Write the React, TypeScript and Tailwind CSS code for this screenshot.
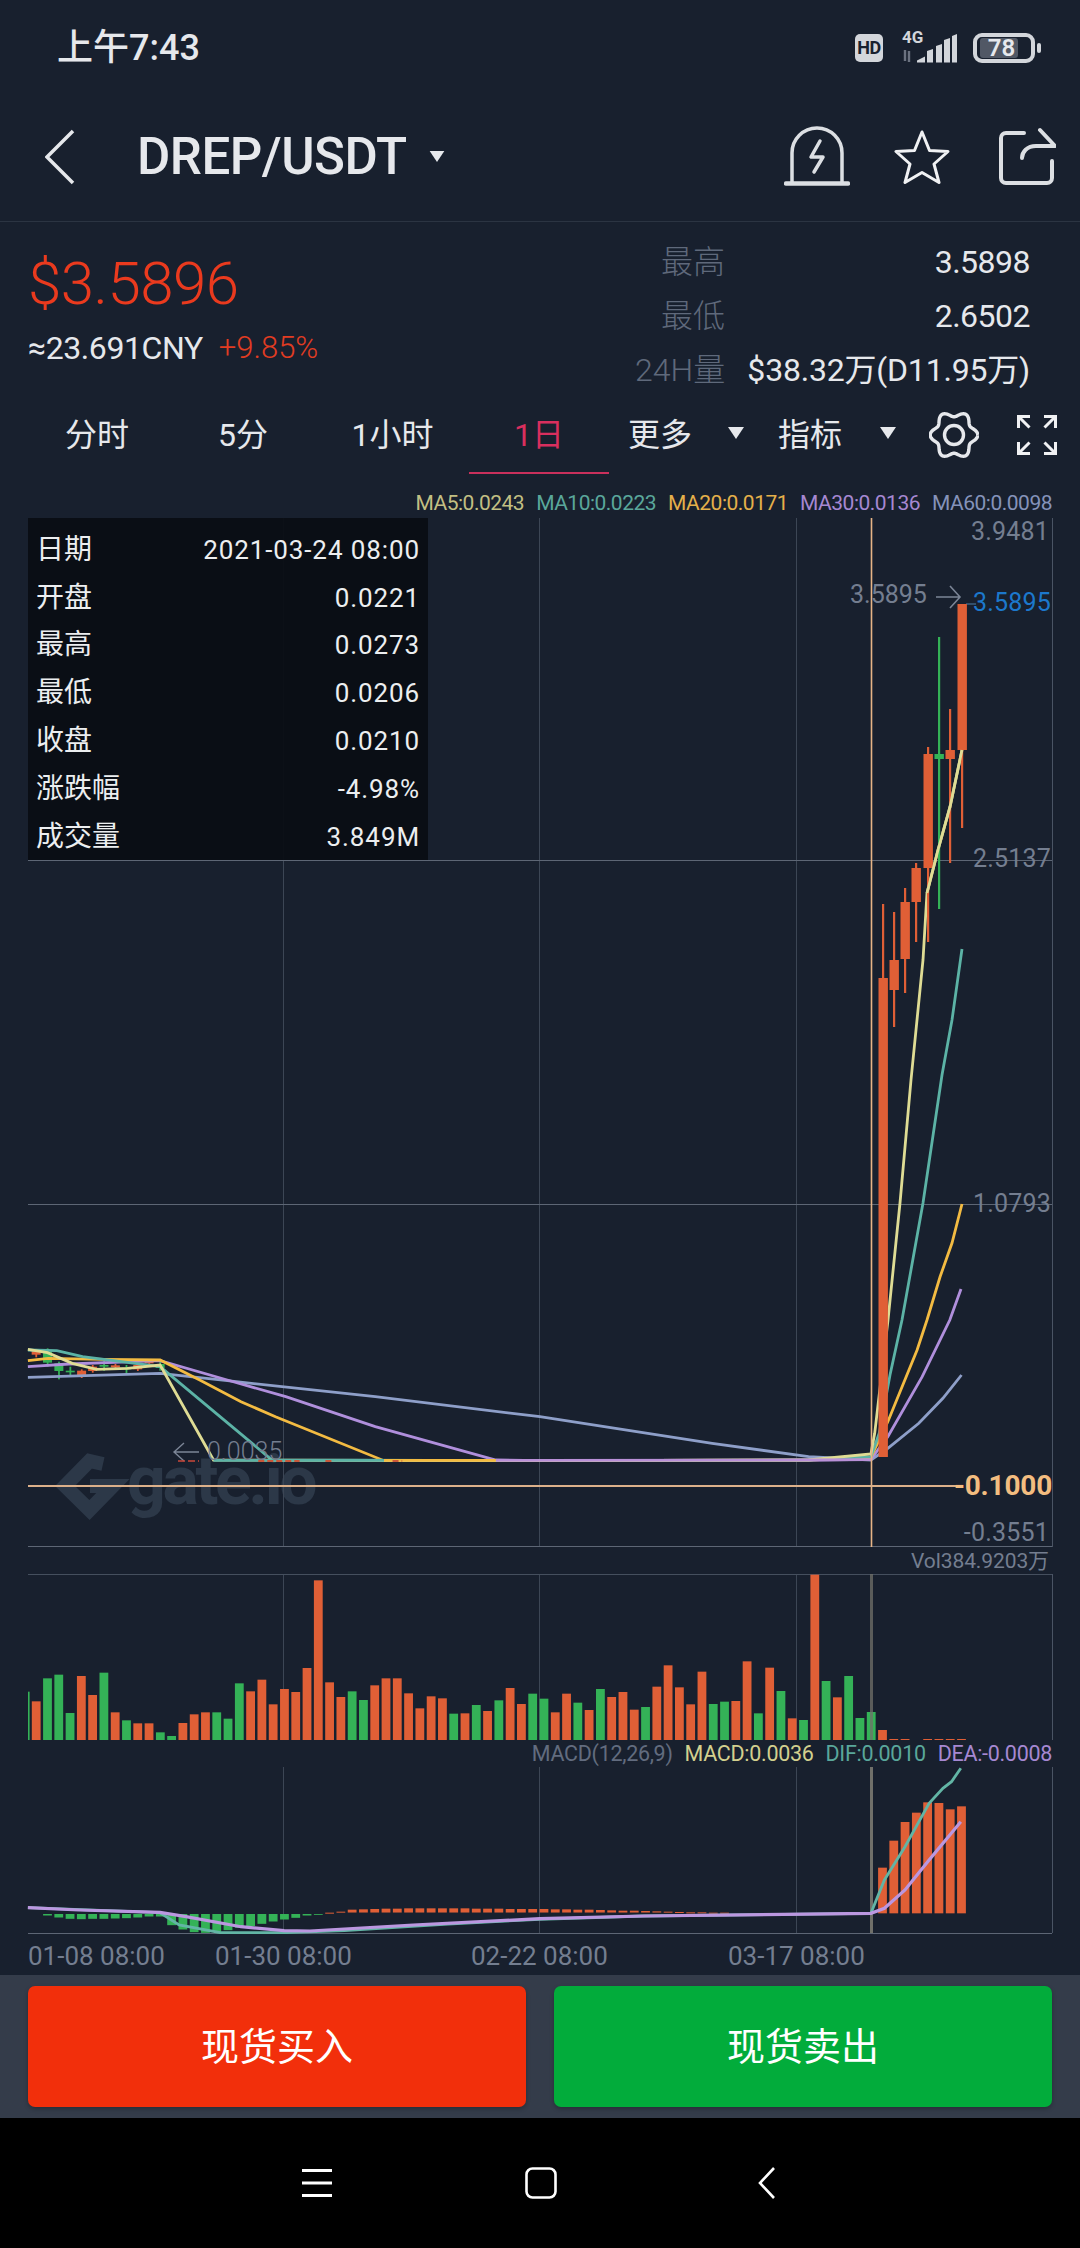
import React from "react";

const R = "#e05f36";
const G = "#34b257";

type P = [number, number];
const z4 = (a: number[][]): P[] => a.map(([x, y]) => [x / 2.904, 1300 + y / 3]);
const z5 = (a: number[][]): P[] => a.map(([x, y]) => [540 + x / 2.904, 1300 + y / 3]);
const z6 = (a: number[][]): P[] => a.map(([x, y]) => [x / 2.904, 1560 + y / 3]);
const z7 = (a: number[][]): P[] => a.map(([x, y]) => [540 + x / 2.904, 1560 + y / 3]);
const pts = (a: P[]) => a.map((p) => p[0].toFixed(1) + "," + p[1].toFixed(1)).join(" ");

const ma5: P[] = [
  ...z4([[81, 148], [138, 158], [210, 190], [280, 208], [370, 205], [465, 195], [620, 480], [1568, 482]]),
  ...z5([[780, 480], [961, 462], [972, 400]]),
  [888, 1320], [900, 1203], [911, 1080], [923, 960], [927, 893], [938, 850], [950, 807], [962, 750],
];
const ma10: P[] = [
  ...z4([[81, 150], [165, 152], [240, 170], [465, 200], [790, 480], [1568, 482]]),
  ...z5([[780, 480], [961, 470], [985, 400]]),
  [890, 1375], [902, 1320], [923, 1203], [942, 1075], [952, 1020], [962, 949],
];
const ma20: P[] = [
  ...z4([[81, 182], [140, 175], [300, 178], [465, 180], [580, 240], [700, 305], [800, 350], [1115, 482], [1568, 482]]),
  ...z5([[780, 480], [961, 472], [1010, 365], [1095, 150]]),
  [927, 1320], [940, 1277], [952, 1243], [962, 1204],
];
const ma30: P[] = [
  ...z4([[81, 200], [200, 192], [465, 182], [660, 240], [830, 290], [1090, 380], [1440, 480], [1568, 482]]),
  ...z5([[780, 480], [961, 478], [1010, 410], [1110, 230], [1190, 60]]),
  [961, 1289],
];
const ma60: P[] = [
  ...z4([[81, 232], [465, 220], [660, 242], [1090, 290], [1568, 350]]),
  ...z5([[500, 430], [780, 470], [961, 480], [1010, 445], [1100, 370], [1170, 295], [1224, 225]]),
];

type Candle = [number, number, number, number, number, string];
const candles: Candle[] = [
  [883, 978, 1457, 904, 1457, R],
  [894, 960, 990, 912, 1027, R],
  [905, 902, 959, 888, 993, R],
  [916, 868, 902, 863, 942, R],
  [928, 754, 868, 747, 942, R],
  [939, 754, 759, 637, 909, G],
  [950, 750, 759, 709, 863, R],
  [962, 604, 750, 604, 828, R],
];
const tiny: number[][] = [
  [105, 152, 164, 148, 172, 0], [138, 155, 188, 145, 200, 1], [171, 190, 213, 185, 238, 1], [204, 212, 217, 200, 226, 1],
  [237, 212, 226, 208, 234, 0], [269, 200, 213, 195, 218, 0], [302, 195, 200, 182, 212, 1], [335, 196, 202, 192, 208, 0],
  [367, 203, 208, 195, 224, 1], [400, 195, 208, 192, 213, 0], [433, 184, 190, 178, 195, 0], [465, 192, 204, 184, 212, 1],
];
const tinyFlat = [[750, 870], [945, 968], [1140, 1168]];

const volTops: [string, number][] = [
  ["o", 424], ["g", 355], ["g", 344], ["g", 459], ["o", 348], ["o", 405], ["g", 338], ["o", 457], ["g", 481], ["o", 490], ["o", 490], ["g", 517], ["g", 528],
  ["o", 489], ["o", 463], ["o", 457], ["g", 457], ["g", 476], ["g", 370], ["o", 394], ["o", 359], ["o", 433], ["o", 387], ["o", 396], ["o", 324], ["o", 61],
  ["o", 367], ["o", 411], ["g", 394], ["g", 420], ["o", 376], ["o", 355], ["o", 355], ["o", 400], ["o", 445], ["o", 409], ["o", 415], ["g", 461], ["o", 460],
  ["g", 435], ["o", 453], ["g", 421], ["o", 384], ["o", 432], ["g", 401],
  ["g", 416], ["o", 457], ["o", 401], ["g", 428], ["o", 450], ["g", 387], ["o", 411], ["o", 396], ["o", 449], ["g", 441], ["o", 380], ["o", 316], ["o", 382],
  ["o", 433], ["o", 335], ["g", 432], ["g", 425], ["o", 423], ["o", 304], ["g", 460], ["o", 323], ["g", 393], ["o", 475], ["g", 480], ["o", 44], ["g", 363],
  ["o", 412], ["g", 348], ["g", 474], ["g", 456], ["o", 510], ["o", 537], ["o", 537], ["o", 540], ["o", 537], ["o", 537], ["o", 537], ["o", 537],
];
const barX = (i: number) => 36.2 + i * 11.284;

const macdGreen = [1063, 1069, 1073, 1074, 1073, 1073, 1072, 1071, 1069, 1066, 1066, 1092, 1105, 1113, 1115, 1112, 1107, 1100, 1095, 1088, 1081, 1075, 1070, 1063, 1061];
const macdRed = [1058, 1055, 1049, 1048, 1047, 1046, 1046, 1045, 1045, 1045, 1045, 1045, 1045, 1046, 1046, 1046, 1047, 1047, 1047, 1047, 1048, 1048, 1049, 1049, 1050, 1051, 1052, 1052, 1053, 1054, 1055, 1056, 1057, 1057, 1058, 1058];
const macdTall = [923, 842, 786, 758, 727, 729, 748, 739];

const dif: P[] = [
  ...z6([[81, 1043], [465, 1058], [520, 1095], [640, 1118], [825, 1118], [1000, 1112], [1300, 1092], [1568, 1078]]),
  ...z7([[300, 1068], [961, 1060], [1000, 960], [1060, 860], [1130, 730], [1170, 685], [1195, 665], [1222, 625]]),
];
const dea: P[] = [
  ...z6([[81, 1043], [230, 1050], [465, 1057], [540, 1070], [700, 1100], [825, 1112], [900, 1113], [1200, 1095], [1568, 1076]]),
  ...z7([[300, 1068], [961, 1060], [1000, 1045], [1060, 990], [1130, 900], [1222, 785]]),
];

const gearPoints = Array.from({ length: 121 }, (_, i) => {
  const t = (i / 120) * Math.PI * 2;
  const r = 21 + 2.8 * Math.cos(6 * t);
  return (25 + r * Math.cos(t)).toFixed(2) + "," + (25 + r * Math.sin(t)).toFixed(2);
}).join(" ");

const rows = [
  ["日期", "2021-03-24 08:00"],
  ["开盘", "0.0221"],
  ["最高", "0.0273"],
  ["最低", "0.0206"],
  ["收盘", "0.0210"],
  ["涨跌幅", "-4.98%"],
  ["成交量", "3.849M"],
];

function VGrid({ y1, y2 }: { y1: number; y2: number }) {
  return (
    <>
      {[283, 539, 796].map((x) => (
        <line key={x} x1={x + 0.5} x2={x + 0.5} y1={y1} y2={y2} stroke="#3c4655" />
      ))}
      <line x1={1052.5} x2={1052.5} y1={y1} y2={y2} stroke="#4a5464" />
    </>
  );
}

function Caret({ className }: { className: string }) {
  return (
    <svg viewBox="0 0 16 12" className={className}>
      <path d="M0 0H16L8 12Z" fill="#e6e8ec" />
    </svg>
  );
}

export default function App() {
  return (
    <div
      className="relative flex h-[2248px] w-[1080px] flex-col overflow-hidden bg-[#18202e] text-[#e6e8ec]"
      style={{ fontFamily: 'Roboto, "Noto Sans CJK SC", sans-serif' }}
    >
      {/* status bar */}
      <div className="flex h-[96px] items-center justify-between pl-[57px] pr-[39px]">
        <span className="text-[36px] font-medium leading-none">上午7:43</span>
        <div className="flex items-center">
          <span className="flex h-[28px] w-[28px] items-center justify-center rounded-[5px] bg-[#d3d6db] text-[18px] font-bold leading-none tracking-[-0.5px] text-[#18202e]">
            HD
          </span>
          <div className="relative ml-[17px] h-[32px] w-[57px]">
            <span className="absolute left-[2px] top-[-3px] text-[17px] font-bold leading-none text-[#d3d6db]">4G</span>
            <svg viewBox="900 30 57 32" className="h-[32px] w-[57px]">
              <path d="M905 48v11M909 60V49" stroke="#6b7280" strokeWidth="2.4" />
              <path d="M917 60.5v-2l8-4v6zM927 60.5V49l6-2v13.5zM936 60.5V44l6-2v18.5zM944 60.5V38l6-2v24.5zM952 60.5V34l5-2v28.5z" fill="#d3d6db" />
            </svg>
          </div>
          <div className="relative ml-[16px] flex h-[30px] w-[62px] items-center rounded-[9px] border-[4px] border-[#d3d6db]">
            <span className="absolute left-[3px] top-[1px] h-[20px] w-[38px] rounded-[3px] bg-[#515865]" />
            <span className="relative w-full pr-[5px] text-center text-[24px] font-semibold leading-none">78</span>
          </div>
          <span className="ml-[2px] h-[10px] w-[4px] rounded-[2px] bg-[#d3d6db]" />
        </div>
      </div>

      {/* header */}
      <div className="flex h-[126px] items-center border-b border-[#2b3442] pb-[4px]">
        <svg viewBox="0 0 32 56" className="ml-[45px] h-[56px] w-[32px]">
          <path d="M29 2L3 28l26 26" fill="none" stroke="#e6e8ec" strokeWidth="3.5" transform="translate(-1 0)" />
        </svg>
        <span className="ml-[60px] text-[51px] font-medium leading-none tracking-[-0.5px]">DREP/USDT</span>
        <Caret className="ml-[22px] h-[11px] w-[16px]" />
        <svg viewBox="0 0 66 66" className="ml-[339px] h-[66px] w-[66px]">
          <path d="M8 58V29a25 25 0 0 1 50 0v29" fill="none" stroke="#dcdfe3" strokeWidth="3.5" />
          <path d="M2 59.5H64" stroke="#dcdfe3" strokeWidth="4.5" strokeLinecap="round" />
          <path d="M36 17L27 33h12l-9 15" fill="none" stroke="#dcdfe3" strokeWidth="3.5" strokeLinecap="round" strokeLinejoin="round" />
        </svg>
        <svg viewBox="0 0 56 54" className="ml-[44px] h-[54px] w-[56px]">
          <path d="M28 2l7.5 18.5L54 21.5 40 34l5 18.5L28 42.5 11 52.5 16 34 2 21.5l18.5-1z" fill="none" stroke="#f0f1f3" strokeWidth="3" strokeLinejoin="round" />
        </svg>
        <svg viewBox="0 0 60 60" className="ml-[46px] h-[60px] w-[60px]">
          <path d="M28 6H10a5 5 0 0 0-5 5v40a5 5 0 0 0 5 5h41a5 5 0 0 0 5-5V34" fill="none" stroke="#dcdfe3" strokeWidth="4" strokeLinecap="round" />
          <path d="M44 3l15 16H40c-9 0-14 6-14 12" fill="none" stroke="#dcdfe3" strokeWidth="4" strokeLinecap="round" strokeLinejoin="round" />
        </svg>
      </div>

      {/* price block */}
      <div className="flex h-[181px] justify-between pl-[28px] pr-[50px]">
        <div>
          <div className="mt-[27px] text-[60px] font-light leading-[70px] tracking-[-0.5px] text-[#ea3a1e]">$3.5896</div>
          <div className="mt-[7px] flex items-center text-[32px] leading-[44px]">
            <span className="tracking-[-0.4px]">≈23.691CNY</span>
            <span className="ml-[16px] text-[31px] font-light text-[#e13c22]">+9.85%</span>
          </div>
        </div>
        <div className="mt-[13px] text-[32px]">
          <div className="flex h-[54px] items-center">
            <span className="w-[90px] whitespace-nowrap text-right font-light text-[#5f697b]">最高</span>
            <span className="w-[305px] text-right tracking-[-0.5px]">3.5898</span>
          </div>
          <div className="flex h-[54px] items-center">
            <span className="w-[90px] whitespace-nowrap text-right font-light text-[#5f697b]">最低</span>
            <span className="w-[305px] text-right tracking-[-0.5px]">2.6502</span>
          </div>
          <div className="flex h-[54px] items-center">
            <span className="w-[90px] whitespace-nowrap text-right font-light text-[#5f697b]">24H量</span>
            <span className="w-[305px] text-right tracking-[-0.2px]">$38.32万(D11.95万)</span>
          </div>
        </div>
      </div>

      {/* tabs */}
      <div className="flex h-[86px] items-start pl-[24px] text-[32px] leading-none">
        <span className="flex h-[64px] w-[146px] items-center justify-center">分时</span>
        <span className="flex h-[64px] w-[146px] items-center justify-center">5分</span>
        <span className="flex h-[64px] w-[153px] items-center justify-center">1小时</span>
        <span className="h-[71px] w-[140px] border-b-[2px] border-[#c9305c] pt-[16px] text-center text-[#d92f5e]">1日</span>
        <span className="ml-[19px] w-[64px] pt-[16px] text-center">更多</span>
        <Caret className="ml-[36px] mt-[24px] h-[12px] w-[16px]" />
        <span className="ml-[34px] w-[64px] pt-[16px] text-center">指标</span>
        <Caret className="ml-[38px] mt-[24px] h-[12px] w-[16px]" />
        <svg viewBox="0 0 50 50" className="ml-[33px] mt-[7px] h-[50px] w-[50px]">
          <polyline points={gearPoints} fill="none" stroke="#e6e8ec" strokeWidth="3.4" strokeLinejoin="round" />
          <circle cx="25" cy="25" r="9.5" fill="none" stroke="#e6e8ec" strokeWidth="3.4" />
        </svg>
        <svg viewBox="0 0 40 40" className="ml-[38px] mt-[12px] h-[40px] w-[40px]">
          <path d="M1.5 13V1.5H13M1.5 1.5l11 11M27 1.5h11.5V13M38.5 1.5l-11 11M1.5 27v11.5H13M1.5 38.500l11-11M38.5 27v11.5H27M38.5 38.500l-11-11" fill="none" stroke="#f0f1f3" strokeWidth="3" />
        </svg>
      </div>

      {/* MA legend */}
      <div className="flex h-[29px] items-center justify-end gap-[12px] pr-[28px] text-[21px] leading-none tracking-[-0.5px]">
        <span className="text-[#c2bf83]">MA5:0.0243</span>
        <span className="text-[#5aa79b]">MA10:0.0223</span>
        <span className="text-[#e5b04a]">MA20:0.0171</span>
        <span className="text-[#a688d2]">MA30:0.0136</span>
        <span className="text-[#8593ba]">MA60:0.0098</span>
      </div>

      {/* main chart */}
      <div className="relative h-[1030px] w-[1080px]">
        <svg viewBox="0 518 1080 1030" className="absolute left-0 top-0 h-[1030px] w-[1080px]">
          <polyline points="103,1464 89.5,1461 65,1486 89.5,1510 113,1486 90,1486" fill="none" stroke="#2c3848" strokeWidth="14" />
        </svg>
        <span className="absolute left-[127px] top-[925px] text-[68px] font-bold leading-[76px] tracking-[-3.4px] text-[#2c3848]">gate.io</span>
        <svg viewBox="0 518 1080 1030" className="absolute left-0 top-0 h-[1030px] w-[1080px]">
          <VGrid y1={518} y2={1547} />
          <line x1={28} x2={1052} y1={860.5} y2={860.5} stroke="#5d6675" />
          <line x1={28} x2={1052} y1={1204.5} y2={1204.5} stroke="#5d6675" />
          <line x1={28} x2={1052} y1={1546.5} y2={1546.5} stroke="#5d6675" />
          <line x1={966} x2={976} y1={604} y2={604} stroke="#4f7fa8" />
          {tiny.map(([x, b1, b2, w1, w2, g], i) => (
            <g key={i} fill={g ? G : R}>
              <rect x={x / 2.904 - 0.8} y={1300 + w1 / 3} width={1.8} height={(w2 - w1) / 3} />
              <rect x={x / 2.904 - 4.5} y={1300 + b1 / 3} width={9} height={(b2 - b1) / 3} />
            </g>
          ))}
          <polyline points={pts(ma60)} fill="none" stroke="#8e9fc9" strokeWidth="2.8" />
          <polyline points={pts(ma30)} fill="none" stroke="#b08fdc" strokeWidth="2.8" />
          <polyline points={pts(ma20)} fill="none" stroke="#f3bb42" strokeWidth="2.8" />
          <polyline points={pts(ma10)} fill="none" stroke="#5cb3a6" strokeWidth="2.8" />
          <polyline points={pts(ma5)} fill="none" stroke="#dfdc94" strokeWidth="2.8" />
          <polyline points={pts(z4([[620, 481], [1115, 481]]))} fill="none" stroke="#5cb3a6" strokeWidth="2.8" />
          <polyline points={pts(z4([[1115, 481], [1440, 481]]))} fill="none" stroke="#f3bb42" strokeWidth="2.8" />
          <polyline points={pts(z4([[1440, 481], [1568, 481]]))} fill="none" stroke="#b990d8" strokeWidth="2.8" />
          <polyline points={pts(z5([[0, 481], [780, 480], [961, 479]]))} fill="none" stroke="#b990d8" strokeWidth="2.8" />
          {tinyFlat.map(([a, b], i) => (
            <line key={i} x1={a / 2.904} x2={b / 2.904} y1={1461} y2={1461} stroke="#c9573a" strokeWidth="2" strokeDasharray="6 3" />
          ))}
          <line x1={871.5} x2={871.5} y1={518} y2={1547} stroke="#e6b486" strokeWidth="1.6" />
          <line x1={28} x2={963} y1={1486} y2={1486} stroke="#dcb08a" strokeWidth="1.8" />
          {candles.map(([x, b1, b2, w1, w2, c]) => (
            <g key={x} fill={c}>
              <rect x={x - 1} y={w1} width={2.2} height={w2 - w1} />
              <rect x={x - 4.5} y={b1} width={9.4} height={b2 - b1} />
            </g>
          ))}
          <polyline points={pts([[927, 893], [938, 850], [950, 807], [962, 750]])} fill="none" stroke="#dfdc94" strokeWidth="2.8" />
          <path d="M936 597h24M950 586l10 11-10 11" fill="none" stroke="#7b8596" strokeWidth="1.6" />
          <path d="M199 1452h-25M184 1443l-10 9 10 9" fill="none" stroke="#7b8596" strokeWidth="1.4" />
          <line x1={178} x2={199} y1={1461} y2={1461} stroke="#c9473a" strokeWidth="1.6" strokeDasharray="7 3" />
        </svg>

        {/* OHLC overlay */}
        <div className="absolute left-[28px] top-0 h-[342px] w-[400px] bg-[#0a0e14]/95 px-[8px] pt-[8px]">
          {rows.map(([a, b]) => (
            <div key={a} className="flex h-[47.8px] items-center justify-between text-[#eceef0]">
              <span className="text-[28px] leading-none">{a}</span>
              <span className="text-[26px] font-normal leading-none tracking-[0.9px]">{b}</span>
            </div>
          ))}
        </div>

        {/* axis labels */}
        <span className="absolute right-[31px] top-[-1px] text-[25px] leading-[30px] tracking-[0.2px] text-[#747e90]">3.9481</span>
        <span className="absolute right-[29px] top-[70px] text-[25px] leading-[30px] tracking-[0.2px] text-[#1c78cc]">3.5895</span>
        <span className="absolute left-[850px] top-[62px] text-[25px] leading-[30px] text-[#747e90]">3.5895</span>
        <span className="absolute right-[29px] top-[326px] text-[25px] leading-[30px] tracking-[0.2px] text-[#747e90]">2.5137</span>
        <span className="absolute right-[29px] top-[671px] text-[25px] leading-[30px] tracking-[0.2px] text-[#747e90]">1.0793</span>
        <span className="absolute left-[207px] top-[919px] text-[25px] font-light leading-[30px] text-[#747e90]">0.0035</span>
        <span className="absolute right-[28px] top-[952px] text-[28px] font-bold leading-[32px] tracking-[-0.2px] text-[#f3bd80]">-0.1000</span>
        <span className="absolute right-[31px] top-[1000px] text-[25px] leading-[30px] tracking-[0.2px] text-[#747e90]">-0.3551</span>
      </div>

      {/* vol label */}
      <div className="flex h-[26px] items-center justify-end pr-[31px] text-[21px] leading-none tracking-[-0.1px] text-[#747e90]">
        Vol384.9203万
      </div>

      {/* vol chart */}
      <svg viewBox="0 1574 1080 167" className="h-[167px] w-[1080px] shrink-0">
        <VGrid y1={1574} y2={1740} />
        <line x1={28} x2={1052} y1={1574.5} y2={1574.5} stroke="#454f5e" />
        <rect x={28} y={1560 + 395 / 3} width={1.6} height={(540 - 395) / 3} fill={G} />
        {volTops.map(([c, top], i) => (
          <rect
            key={i}
            x={barX(i) - 4.4}
            y={1560 + top / 3}
            width={8.8}
            height={(540 - top) / 3}
            fill={c === "g" ? G : R}
            opacity={top === 540 ? 0 : 1}
          />
        ))}
        <rect x={870} y={1574} width={3} height={166} fill="#70706a" fillOpacity="0.75" />
      </svg>

      {/* macd legend */}
      <div className="flex h-[26px] items-center justify-end gap-[12px] pr-[28px] text-[21.5px] leading-none tracking-[-0.3px]">
        <span className="text-[#626c7f]">MACD(12,26,9)</span>
        <span className="text-[#d3d08e]">MACD:0.0036</span>
        <span className="text-[#5aa79b]">DIF:0.0010</span>
        <span className="text-[#a688d2]">DEA:-0.0008</span>
      </div>

      {/* macd chart */}
      <svg viewBox="0 1767 1080 167" className="h-[167px] w-[1080px] shrink-0">
        <VGrid y1={1767} y2={1933} />
        <line x1={28} x2={1052} y1={1933.5} y2={1933.5} stroke="#5d6675" />
        {macdGreen.map((b, i) => (
          <rect key={i} x={barX(i + 1) - 4.4} y={1914} width={8.8} height={(b - 1060) / 3 + 0.5} fill={G} />
        ))}
        {macdRed.map((t, i) => (
          <rect key={i} x={barX(i + 26) - 4.4} y={1560 + t / 3} width={8.8} height={Math.max((1060 - t) / 3 - 0.8, 1)} fill={R} />
        ))}
        <rect x={870} y={1767} width={3} height={166} fill="#70706a" />
        {macdTall.map((t, i) => (
          <rect key={i} x={barX(75 + i) - 4.4} y={1560 + t / 3} width={8.8} height={(1060 - t) / 3} fill={R} />
        ))}
        <polyline points={pts(dif)} fill="none" stroke="#62b5a5" strokeWidth="2.8" />
        <polyline points={pts(dea)} fill="none" stroke="#bb97e0" strokeWidth="3.2" />
      </svg>

      {/* date axis */}
      <div className="flex h-[41px] items-center pl-[28px] pt-[3px] text-[26px] leading-none text-[#747e90]">
        <span className="w-[187px] whitespace-nowrap">01-08 08:00</span>
        <span className="w-[256px] whitespace-nowrap">01-30 08:00</span>
        <span className="w-[257px] whitespace-nowrap">02-22 08:00</span>
        <span className="whitespace-nowrap">03-17 08:00</span>
      </div>

      {/* action bar */}
      <div className="flex h-[143px] gap-[28px] bg-[#343c4a] px-[28px] pt-[11px]">
        <button className="flex h-[121px] flex-1 items-center justify-center rounded-[7px] bg-[#f22f0b] text-[38px] leading-none text-white shadow-[0_2px_4px_rgba(0,0,0,0.25)]">
          现货买入
        </button>
        <button className="flex h-[121px] flex-1 items-center justify-center rounded-[7px] bg-[#02ac3b] text-[38px] leading-none text-white shadow-[0_2px_4px_rgba(0,0,0,0.25)]">
          现货卖出
        </button>
      </div>

      {/* system nav */}
      <div className="flex flex-1 items-start bg-black">
        <svg viewBox="0 0 30 30" className="ml-[302px] mt-[50px] h-[30px] w-[30px]">
          <path d="M0 2.500H30M0 15H30M0 27.500H30" stroke="#fff" strokeWidth="3" />
        </svg>
        <svg viewBox="0 0 32 32" className="ml-[193px] mt-[49px] h-[32px] w-[32px]">
          <rect x="1.5" y="1.5" width="29" height="29" rx="6" fill="none" stroke="#fff" strokeWidth="2.6" />
        </svg>
        <svg viewBox="0 0 18 32" className="ml-[201px] mt-[49px] h-[32px] w-[18px]">
          <path d="M16 1L2 16l14 15" fill="none" stroke="#fff" strokeWidth="2.6" />
        </svg>
      </div>
    </div>
  );
}
